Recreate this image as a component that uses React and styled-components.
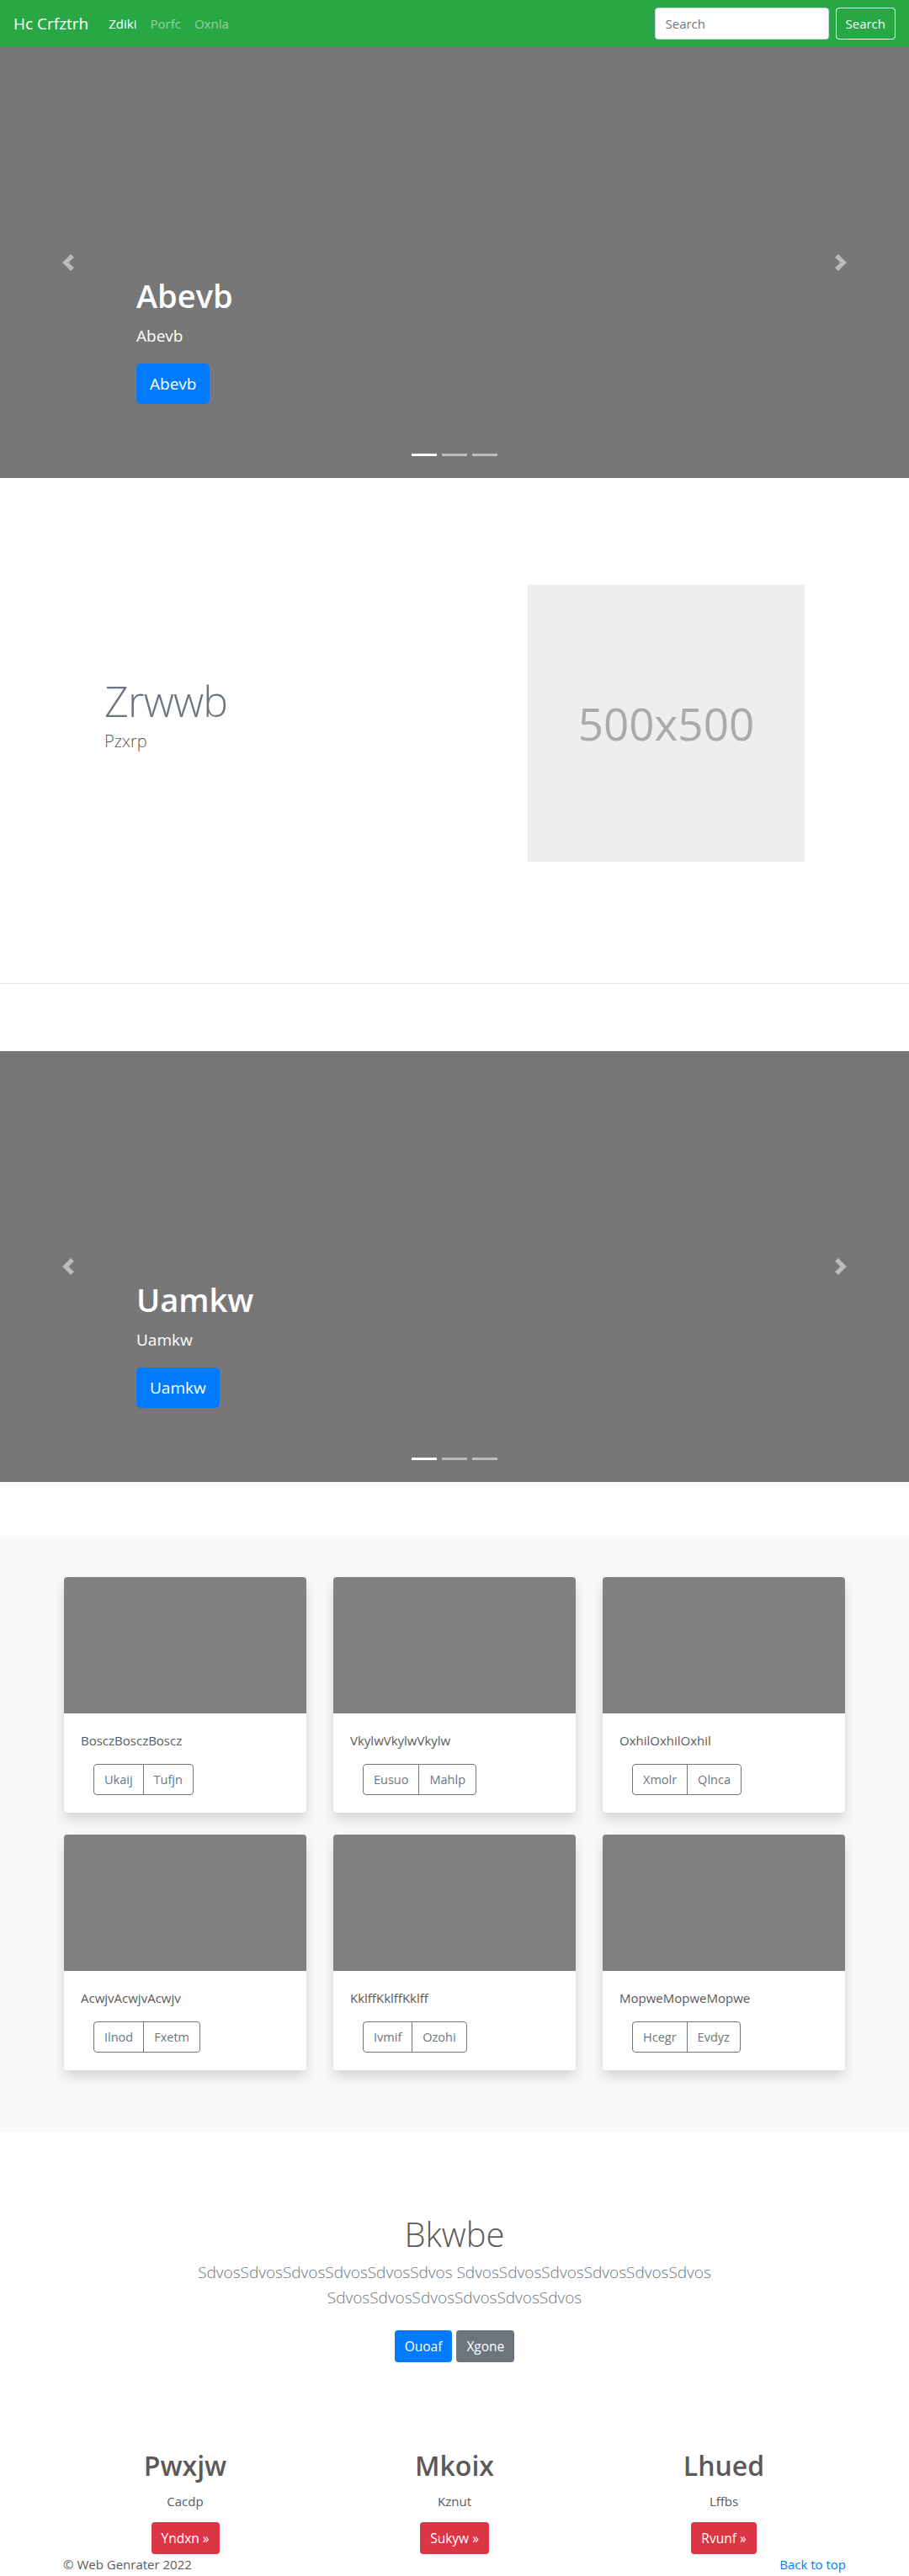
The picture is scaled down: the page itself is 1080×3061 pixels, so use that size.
import React from 'react'
import styled, { createGlobalStyle } from 'styled-components'

const GlobalStyle = createGlobalStyle`
  * { box-sizing: border-box; }
  body {
    margin: 0;
    font-family: "Open Sans", "Noto Sans", Arial, sans-serif;
    font-size: 16px;
    line-height: 1.5;
    color: #5a5a5a;
    background: #fff;
  }
  h1, h2, p { margin: 0; }
  a { text-decoration: none; }
`

/* navbar */
const Navbar = styled.nav`
  height: 56px;
  background: #28a745;
  display: flex;
  align-items: center;
  padding: 0 16px;
`

const Brand = styled.a`
  color: #fff;
  font-size: 19px;
  margin-right: 16px;
`

const NavLink = styled.a`
  padding: 0 8px;
  font-size: 15px;
  color: ${p => (p.active ? '#fff' : 'rgba(255,255,255,.5)')};
`

const SearchForm = styled.form`
  margin-left: auto;
  display: flex;
  gap: 8px;
`

const SearchInput = styled.input`
  width: 207px;
  height: 38px;
  border: 1px solid #ced4da;
  border-radius: 4px;
  padding: 6px 12px;
  font: inherit;
  font-size: 15px;
  &::placeholder { color: #6c757d; }
`

const OutlineLight = styled.button`
  height: 38px;
  padding: 0 11px;
  background: transparent;
  border: 1px solid #f8f9fa;
  border-radius: 4px;
  color: #f8f9fa;
  font: inherit;
  font-size: 15px;
`

/* carousel */
const Slide = styled.div`
  position: relative;
  height: 512px;
  background: #777;
  display: flex;
  align-items: flex-end;
  padding: 0 162px 88px;
`

const Caption = styled.div`
  color: #fff;
  h1 {
    font-size: 38px;
    font-weight: 600;
    line-height: 1.2;
    margin-bottom: 9px;
  }
  p {
    font-size: 19px;
    line-height: 30px;
    margin-bottom: 18px;
  }
`

const Control = styled.span`
  position: absolute;
  top: 0;
  bottom: 0;
  ${p => (p.side === 'left' ? 'left: 0;' : 'right: 0;')}
  width: 162px;
  display: flex;
  align-items: center;
  justify-content: center;
  opacity: 0.5;
`

const Indicators = styled.ol`
  position: absolute;
  left: 0;
  right: 0;
  top: 483px;
  margin: 0;
  padding: 0;
  list-style: none;
  display: flex;
  justify-content: center;
  gap: 6px;
`

const Dot = styled.li`
  width: 30px;
  height: 3px;
  background: #fff;
  opacity: ${p => (p.active ? 1 : 0.5)};
`

const BigButton = styled.a`
  display: inline-block;
  padding: 9px 16px;
  font-size: 19px;
  line-height: 30px;
  border-radius: 5px;
  background: #007bff;
  color: #fff;
`

const Chevron = ({ dir }) => (
  <svg width="20" height="20" viewBox="0 0 8 8" fill="#fff">
    {dir === 'left' ? (
      <path d="M5.25 0l-4 4 4 4 1.5-1.5L4.25 4l2.5-2.5L5.25 0z" />
    ) : (
      <path d="M2.75 0l-1.5 1.5L3.75 4l-2.5 2.5L2.75 8l4-4-4-4z" />
    )}
  </svg>
)

const Carousel = ({ title }) => (
  <Slide>
    <Caption>
      <h1>{title}</h1>
      <p>{title}</p>
      <BigButton href="#">{title}</BigButton>
    </Caption>
    <Control side="left"><Chevron dir="left" /></Control>
    <Control side="right"><Chevron dir="right" /></Control>
    <Indicators>
      <Dot active />
      <Dot />
      <Dot />
    </Indicators>
  </Slide>
)

/* featurette */
const Featurette = styled.section`
  padding: 127px 124px 0;
  display: grid;
  grid-template-columns: 1fr 329px;
  align-items: center;
`

const FeatureText = styled.div`
  h2 {
    font-size: 50px;
    font-weight: 300;
    line-height: 1;
    letter-spacing: -0.8px;
    color: #6c757d;
    margin-bottom: 8px;
  }
  p {
    font-size: 20px;
    font-weight: 300;
    line-height: 30px;
    margin-bottom: 16px;
  }
`

const Placeholder = styled.div`
  width: 329px;
  height: 329px;
  background: #eee;
  color: #aaa;
  font-size: 53px;
  display: flex;
  align-items: center;
  justify-content: center;
`

const Divider = styled.hr`
  margin: 144px 0 80px;
  border: 0;
  border-top: 1px solid rgba(0, 0, 0, 0.1);
`

/* album */
const Album = styled.section`
  margin-top: 64px;
  background: #f8f9fa;
  padding: 49px 0 74px;
`

const CardGrid = styled.div`
  width: 928px;
  margin: 0 auto;
  display: grid;
  grid-template-columns: repeat(3, 288px);
  gap: 26px 32px;
`

const Card = styled.div`
  background: #fff;
  border-radius: 4px;
  overflow: hidden;
  box-shadow: 0 8px 16px rgba(0, 0, 0, 0.15);
`

const Thumb = styled.div`
  height: 162px;
  background: #808080;
`

const CardBody = styled.div`
  padding: 20px 20px 21px;
  p {
    font-size: 15px;
    line-height: 24px;
    margin-bottom: 16px;
  }
`

const BtnGroup = styled.div`
  display: inline-flex;
  margin-left: 15px;
`

const GroupBtn = styled.button`
  height: 37px;
  padding: 0 12px;
  font: inherit;
  font-size: 14.5px;
  color: #6c757d;
  background: transparent;
  border: 1px solid #6c757d;
  &:first-child { border-radius: 4px 0 0 4px; }
  &:last-child { border-radius: 0 4px 4px 0; margin-left: -1px; }
`

/* jumbotron */
const Jumbo = styled.section`
  padding-top: 97px;
  text-align: center;
  h1 {
    font-size: 40px;
    font-weight: 300;
    line-height: 1.2;
    margin-bottom: 6px;
  }
`

const Lead = styled.p`
  width: 700px;
  margin: 0 auto 24px !important;
  font-size: 19px;
  font-weight: 300;
  line-height: 30px;
  color: #6c757d;
`

const ButtonRow = styled.div`
  display: flex;
  justify-content: center;
  gap: 5px;
`

const Btn = styled.a`
  display: inline-block;
  padding: 7px 12px;
  font-size: 15.5px;
  line-height: 24px;
  border-radius: 4px;
  color: #fff;
  background: ${p => p.bg};
`

/* marketing */
const Marketing = styled.section`
  width: 960px;
  margin: 104px auto 0;
  display: grid;
  grid-template-columns: repeat(3, 1fr);
  text-align: center;
  h2 {
    font-size: 32px;
    font-weight: 600;
    line-height: 1.2;
    margin-bottom: 12px;
  }
  p {
    font-size: 15px;
    margin-bottom: 13px;
  }
`

const Footer = styled.footer`
  width: 930px;
  margin: 0 auto;
  display: flex;
  justify-content: space-between;
  font-size: 15px;
  line-height: 24px;
  a { color: #007bff; }
`

const cards = [
  ['BosczBosczBoscz', 'Ukaij', 'Tufjn'],
  ['VkylwVkylwVkylw', 'Eusuo', 'Mahlp'],
  ['OxhilOxhilOxhil', 'Xmolr', 'Qlnca'],
  ['AcwjvAcwjvAcwjv', 'Ilnod', 'Fxetm'],
  ['KklffKklffKklff', 'Ivmif', 'Ozohi'],
  ['MopweMopweMopwe', 'Hcegr', 'Evdyz']
]

const columns = [
  ['Pwxjw', 'Cacdp', 'Yndxn'],
  ['Mkoix', 'Kznut', 'Sukyw'],
  ['Lhued', 'Lffbs', 'Rvunf']
]

const App = () => (
  <>
    <GlobalStyle />
    <Navbar>
      <Brand href="#">Hc Crfztrh</Brand>
      <NavLink href="#" active>Zdiki</NavLink>
      <NavLink href="#">Porfc</NavLink>
      <NavLink href="#">Oxnla</NavLink>
      <SearchForm onSubmit={e => e.preventDefault()}>
        <SearchInput placeholder="Search" />
        <OutlineLight>Search</OutlineLight>
      </SearchForm>
    </Navbar>

    <Carousel title="Abevb" />

    <Featurette>
      <FeatureText>
        <h2>Zrwwb</h2>
        <p>Pzxrp</p>
      </FeatureText>
      <Placeholder>500x500</Placeholder>
    </Featurette>
    <Divider />

    <Carousel title="Uamkw" />

    <Album>
      <CardGrid>
        {cards.map(([text, a, b]) => (
          <Card key={text}>
            <Thumb />
            <CardBody>
              <p>{text}</p>
              <BtnGroup>
                <GroupBtn>{a}</GroupBtn>
                <GroupBtn>{b}</GroupBtn>
              </BtnGroup>
            </CardBody>
          </Card>
        ))}
      </CardGrid>
    </Album>

    <Jumbo>
      <h1>Bkwbe</h1>
      <Lead>SdvosSdvosSdvosSdvosSdvosSdvos SdvosSdvosSdvosSdvosSdvosSdvos SdvosSdvosSdvosSdvosSdvosSdvos</Lead>
      <ButtonRow>
        <Btn href="#" bg="#007bff">Ouoaf</Btn>
        <Btn href="#" bg="#6c757d">Xgone</Btn>
      </ButtonRow>
    </Jumbo>

    <Marketing>
      {columns.map(([h, p, b]) => (
        <div key={h}>
          <h2>{h}</h2>
          <p>{p}</p>
          <Btn href="#" bg="#dc3545">{b} &raquo;</Btn>
        </div>
      ))}
    </Marketing>

    <Footer>
      <span>&copy; Web Genrater 2022</span>
      <a href="#">Back to top</a>
    </Footer>
  </>
)

export default App
